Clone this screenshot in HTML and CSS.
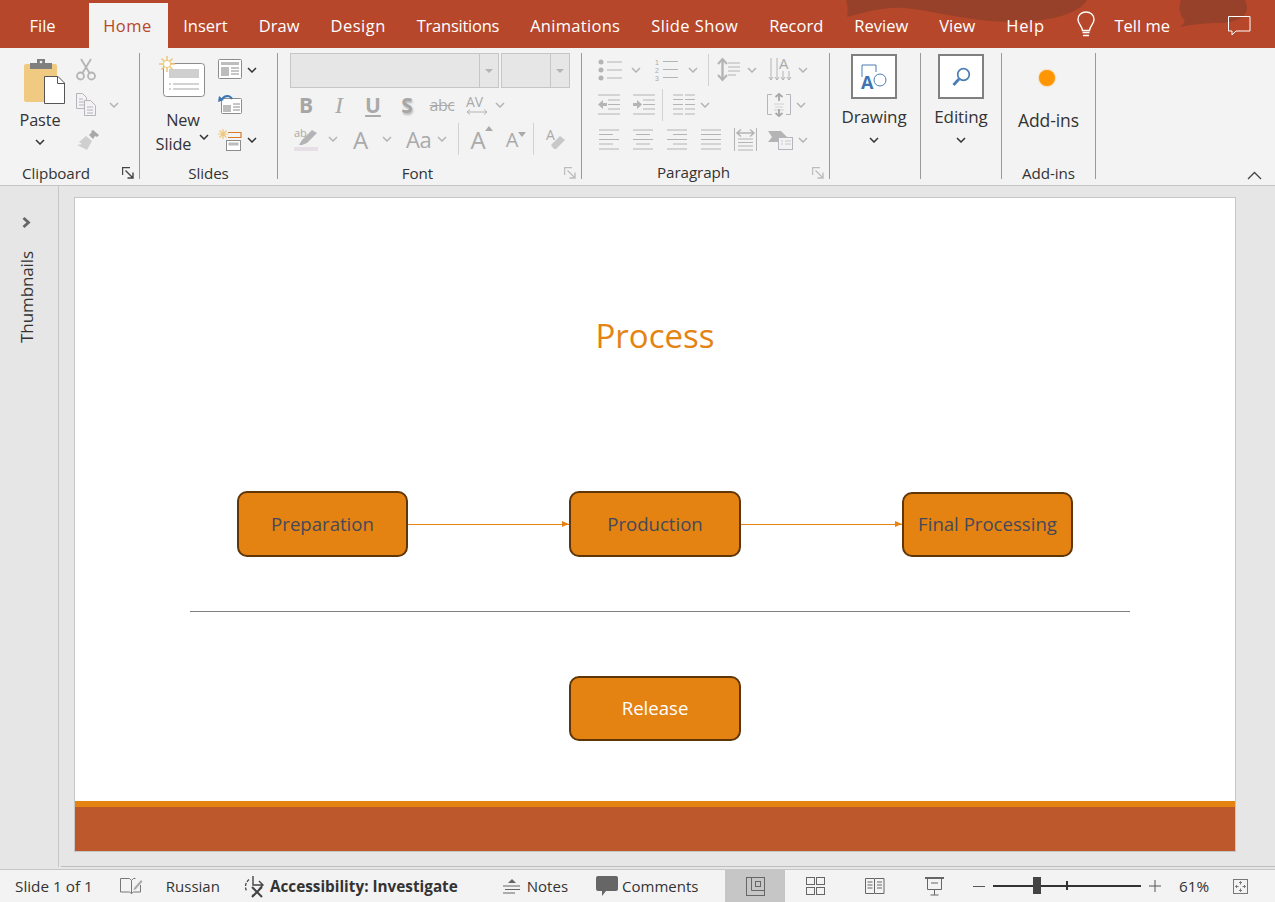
FILE: index.html
```html
<!DOCTYPE html>
<html lang="en">

<head>
  <meta charset="UTF-8">
  <title>Process - PowerPoint</title>
  <link rel="stylesheet" href="styles.css">
</head>

<body>

  <svg class="defs" width="0" height="0">
    <symbol id="chev" viewBox="0 0 10 6"><path d="M1 1l4 4 4-4" fill="none" stroke="currentColor" stroke-width="1.5"/></symbol>
    <symbol id="launch" viewBox="0 0 12 12"><path d="M.5 8V.5H8M3.5 3.5l7 7M11 5.5V11H5.5" fill="none" stroke="currentColor" stroke-width="1.4"/></symbol>
  </svg>

  <!-- title bar with tabs -->
  <div class="titlebar">
    <svg class="waves" width="1275" height="48" viewBox="0 0 1275 48">
      <path d="M846 0C848 6 848 12 847 17C862 13 885 6 905 8C935 11 975 23 1020 22C1055 21 1080 12 1087 0Z" fill="#97412a"/>
      <path d="M1181 0C1178 8 1180 16 1185 21C1183 24 1182 25 1180 27C1195 24 1205 23 1222 23C1235 22 1247 18 1247 8C1247 4 1246 2 1245 0Z" fill="#97412a"/>
    </svg>
    <div class="tab tab-file">File</div>
    <div class="tab tab-active">Home</div>
    <div class="tab">Insert</div>
    <div class="tab">Draw</div>
    <div class="tab tab-design">Design</div>
    <div class="tab tab-trans">Transitions</div>
    <div class="tab tab-anim">Animations</div>
    <div class="tab tab-show">Slide Show</div>
    <div class="tab">Record</div>
    <div class="tab">Review</div>
    <div class="tab">View</div>
    <div class="tab tab-help">Help</div>
    <div class="title-right">
      <svg width="18" height="26" viewBox="0 0 18 26" fill="none" stroke="#fff" stroke-width="1.4"><path d="M5.5 19.5C5 15 1 13 1 8.500C1 4 4.500 1 9 1s8 3 8 7.500C17 13 13 15 12.500 19.500Z"/><path d="M5.500 21.500h7M6 24.500h6" stroke-width="1.6"/></svg>
      <span class="tell">Tell me</span>
      <svg class="title-comment" width="23" height="20" viewBox="0 0 23 20" fill="none" stroke="#fff"><path d="M.5.500h21.500v14.500H8l-4 4v-4H.5Z"/></svg>
    </div>
  </div>

  <!-- ribbon -->
  <div class="ribbon">

    <div class="group g-clipboard">
      <div class="group-body">
        <div class="big paste">
          <svg width="41" height="46" viewBox="0 0 41 46">
            <rect x="0" y="5" width="33" height="38" rx="2" fill="#f0ca80"/>
            <path d="M13 0h8v4h7v6H6V4h7Z" fill="#7f7f7f"/>
            <circle cx="17" cy="3" r="1.300" fill="#f3f3f3"/>
            <path d="M20.500 17.500H34l6.500 6.500v20.500h-20Z" fill="#fff" stroke="#555"/>
            <path d="M33.500 18v6.500H40" fill="none" stroke="#555"/>
          </svg>
          <span class="big-label paste-label">Paste</span>
          <svg class="chev-dark paste-chev" width="10" height="6"><use href="#chev"/></svg>
        </div>
        <div class="rows3 small-col">
          <div class="cell">
            <svg width="20" height="23" viewBox="0 0 20 23" fill="none" stroke="#b4b4b4" stroke-width="1.800"><circle cx="4.500" cy="18" r="3.500"/><circle cx="15.500" cy="18" r="3.500"/><path d="M6.500 15L15 1M13.500 15L5 1"/></svg>
          </div>
          <div class="cell cell-gap13">
            <svg width="20" height="23" viewBox="0 0 20 23" fill="#f3f3f3" stroke="#b9b3bd"><path d="M.5.500h6l4 4v11H.5Z"/><path d="M8.500 7.500h6l5 5v10h-11Z"/><path d="M3 6h4M3 9h5M3 12h5M11 14h6M11 17h6M11 20h6"/></svg>
            <svg class="chev-off" width="10" height="6"><use href="#chev"/></svg>
          </div>
          <div class="cell">
            <svg width="24" height="22" viewBox="0 0 24 22"><path d="M17 1l6 5-2 2-2-1-2 3-4-4 3-3-1-1Z" fill="#a8a8a8"/><path d="M10 7l6 5-5 9-10-5 5-1-3-2Z" fill="#cfcfcf"/></svg>
          </div>
        </div>
      </div>
      <div class="group-label has-launcher label-clipboard">Clipboard</div>
      <svg class="launcher launcher-on" width="12" height="12"><use href="#launch"/></svg>
    </div>

    <div class="group g-slides">
      <div class="group-body">
        <div class="big new-slide">
          <svg width="46" height="42" viewBox="0 0 46 42">
            <rect x="4.500" y="7.500" width="41" height="33" rx="3" fill="#fff" stroke="#8c8c8c"/>
            <rect x="10" y="13" width="30" height="9" fill="#cfcfcf"/>
            <path d="M10 28h2M14 28h26M10 33h2M14 33h26" stroke="#a6a6a6"/>
            <path d="M8 0v16M0 8h16M2.500 2.500l11 11M13.500 2.500l-11 11" stroke="#efc77c" stroke-width="1.600"/>
            <circle cx="8" cy="8" r="3.600" fill="#fff" stroke="#efc77c"/>
          </svg>
          <span class="big-label new-label">New</span>
          <span class="big-label slide-label">Slide <svg class="chev-dark" width="10" height="6"><use href="#chev"/></svg></span>
        </div>
        <div class="rows3 small-col layouts">
          <div class="cell cell-gap4">
            <svg width="25" height="21" viewBox="0 0 25 21"><rect x=".5" y=".5" width="23" height="19" rx="1" fill="#fff" stroke="#8c8c8c"/><path d="M3 3h18v3H3ZM3 8h8v9H3Z" fill="#bdbdbd"/><path d="M13 9h8M13 12h8M13 15h8" stroke="#8c8c8c"/></svg>
            <svg class="chev-dark" width="10" height="6"><use href="#chev"/></svg>
          </div>
          <div class="cell">
            <svg width="25" height="20" viewBox="0 0 25 20"><rect x="3.500" y="3.500" width="20" height="15" rx="1" fill="#fff" stroke="#8c8c8c"/><path d="M5 10h8v7H5Z" fill="#bdbdbd"/><path d="M15 9h7M15 12h7M15 15h7" stroke="#8c8c8c"/><path d="M4 4C7 0 12 0 14 4" fill="none" stroke="#3d75b3" stroke-width="2"/><path d="M0 7l1-6 5 4Z" fill="#3d75b3"/></svg>
          </div>
          <div class="cell cell-gap4">
            <svg width="25" height="22" viewBox="0 0 25 22"><path d="M5 0v10M0 5h10M1.500 1.500l7 7M8.500 1.500l-7 7" stroke="#efc77c" stroke-width="1.200"/><path d="M10 3.500h13v5h-13" fill="none" stroke="#d97a2a" stroke-width="1.200"/><rect x="8.500" y="11.500" width="14" height="10" fill="#fff" stroke="#8c8c8c"/><rect x="10.500" y="13.500" width="10" height="3" fill="#bdbdbd"/></svg>
            <svg class="chev-dark" width="10" height="6"><use href="#chev"/></svg>
          </div>
        </div>
      </div>
      <div class="group-label">Slides</div>
    </div>

    <div class="group g-font">
      <div class="group-body">
        <div class="combos">
          <div class="combo combo-name"><span class="combo-btn"></span></div>
          <div class="combo combo-size"><span class="combo-btn"></span></div>
        </div>
        <div class="font-row row2">
          <span class="fmt fmt-b">B</span>
          <span class="fmt fmt-i">I</span>
          <span class="fmt fmt-u">U</span>
          <span class="fmt fmt-s">S</span>
          <span class="fmt fmt-abc">abc</span>
          <span class="fmt fmt-av">
            <svg width="22" height="20" viewBox="0 0 22 20"><text x="0" y="12" class="av-text">AV</text><path d="M1 17h20M4 14.500L1 17l3 2.500M18 14.500l3 2.500-3 2.500" fill="none" stroke="#b4b4b4"/></svg>
            <svg class="chev-off" width="10" height="6"><use href="#chev"/></svg>
          </span>
        </div>
        <div class="font-row row3">
          <span class="fmt fmt-hl">
            <svg width="24" height="23" viewBox="0 0 24 23"><text x="0" y="9" class="hl-text">ab</text><path d="M5 17l3-5L18 2l5 3-10 10-5 2Z" fill="#b4b4b4"/><rect y="19" width="24" height="4" fill="#e6e0e6"/></svg>
            <svg class="chev-off" width="10" height="6"><use href="#chev"/></svg>
          </span>
          <span class="fmt fmt-a">A
            <svg class="chev-off" width="10" height="6"><use href="#chev"/></svg>
          </span>
          <span class="fmt fmt-aa">Aa
            <svg class="chev-off" width="10" height="6"><use href="#chev"/></svg>
          </span>
          <span class="vsep"></span>
          <span class="fmt fmt-grow">A<i class="tri-up"></i></span>
          <span class="fmt fmt-shrink">A<i class="tri-down"></i></span>
          <span class="vsep"></span>
          <span class="fmt fmt-clear">
            <svg width="20" height="22" viewBox="0 0 20 22"><text x="0" y="12" class="clear-text">A</text><path d="M5 17l9-9 5 4-9 9h-2Z" fill="#c8c8c8"/></svg>
          </span>
        </div>
      </div>
      <div class="group-label has-launcher">Font</div>
      <svg class="launcher" width="12" height="12"><use href="#launch"/></svg>
    </div>

    <div class="group g-para">
      <div class="group-body rows3">
        <div class="para-row">
          <span class="pb p-bullets">
            <svg width="24" height="22" viewBox="0 0 24 22"><circle cx="3" cy="3" r="2.500" fill="#b4b4b4"/><circle cx="3" cy="11" r="2.500" fill="#b4b4b4"/><circle cx="3" cy="19" r="2.500" fill="#b4b4b4"/><path d="M9 3h15M9 11h15M9 19h15" stroke="#b4b4b4"/></svg>
            <svg class="chev-off" width="10" height="6"><use href="#chev"/></svg>
          </span>
          <span class="pb p-numbers">
            <svg width="24" height="24" viewBox="0 0 24 24"><text x="0" y="7" class="num-text">1</text><text x="0" y="15" class="num-text">2</text><text x="0" y="23" class="num-text">3</text><path d="M8 3.500h15M8 11.500h15M8 19.500h15" stroke="#b4b4b4"/></svg>
            <svg class="chev-off" width="10" height="6"><use href="#chev"/></svg>
          </span>
          <span class="vsep"></span>
          <span class="pb p-spacing">
            <svg width="23" height="25" viewBox="0 0 23 25" fill="none" stroke="#b4b4b4"><path d="M4.500 2v21" stroke-width="2.400"/><path d="M0 7l4.500-5L9 7M0 18l4.500 5L9 18" stroke-width="2"/><path d="M10 6h12M10 10h12M10 14h12M10 18h8"/></svg>
            <svg class="chev-off" width="10" height="6"><use href="#chev"/></svg>
          </span>
          <span class="pb p-dir">
            <svg width="24" height="25" viewBox="0 0 24 25"><text x="10" y="12" class="dir-text">A</text><path d="M2 1v22M8 1v22M14 14v9M20 14v9M0 20l2 3 2-3M6 20l2 3 2-3M12 20l2 3 2-3M18 20l2 3 2-3" fill="none" stroke="#b4b4b4"/></svg>
            <svg class="chev-off" width="10" height="6"><use href="#chev"/></svg>
          </span>
        </div>
        <div class="para-row">
          <span class="pb p-outdent">
            <svg width="23" height="21" viewBox="0 0 23 21"><path d="M0 1h22M10 6h12M10 10.500h12M10 15h12M0 20h22" stroke="#b4b4b4"/><path d="M0 10.500L5 6v3h4v3H5v3Z" fill="#b4b4b4"/></svg>
          </span>
          <span class="pb p-indent">
            <svg width="23" height="21" viewBox="0 0 23 21"><path d="M1 1h22M11 6h12M11 10.500h12M11 15h12M1 20h22" stroke="#b4b4b4"/><path d="M10 10.500L5 6v3H1v3h4v3Z" fill="#b4b4b4"/></svg>
          </span>
          <span class="vsep"></span>
          <span class="pb p-cols">
            <svg width="22" height="21" viewBox="0 0 22 21"><path d="M0 1h10M12 1h10M0 5.500h10M12 5.500h10M0 10.500h10M12 10.500h10M0 15h10M12 15h10M0 20h10M12 20h10" stroke="#b4b4b4"/></svg>
            <svg class="chev-off" width="10" height="6"><use href="#chev"/></svg>
          </span>
          <span class="pb p-valign">
            <svg width="24" height="24" viewBox="0 0 24 24" fill="none" stroke="#b9b3bd"><path d="M5 1.500H.5v20H5M19 1.500h4.500v20H19"/><path d="M7 11h10M8 14h8M7 17h10" stroke="#d0d0d0"/><path d="M12 1v7M8.500 4L12 1l3.500 3M12 16v7M8.500 20l3.500 3 3.500-3" stroke="#a8a8a8" stroke-width="1.800"/></svg>
            <svg class="chev-off" width="10" height="6"><use href="#chev"/></svg>
          </span>
        </div>
        <div class="para-row">
          <span class="pb p-align">
            <svg width="21" height="21" viewBox="0 0 21 21"><path d="M0 1h20M0 5.500h14M0 10.500h20M0 15h14M0 20h20" stroke="#b4b4b4"/></svg>
          </span>
          <span class="pb p-align">
            <svg width="21" height="21" viewBox="0 0 21 21"><path d="M0 1h20M3 5.500h14M0 10.500h20M3 15h14M0 20h20" stroke="#b4b4b4"/></svg>
          </span>
          <span class="pb p-align">
            <svg width="21" height="21" viewBox="0 0 21 21"><path d="M0 1h20M6 5.500h14M0 10.500h20M6 15h14M0 20h20" stroke="#b4b4b4"/></svg>
          </span>
          <span class="pb p-align">
            <svg width="21" height="21" viewBox="0 0 21 21"><path d="M0 1h20M0 5.500h20M0 10.500h20M0 15h20M0 20h20" stroke="#b4b4b4"/></svg>
          </span>
          <span class="pb p-dist">
            <svg width="23" height="23" viewBox="0 0 23 23" fill="none" stroke="#b4b4b4"><path d="M.5 0v23M22.500 0v23M4 11h15M4 14.500h15M4 18h15M4 22h15"/><path d="M3 5h17M7 1.500L3 5l4 3.500M16 1.500L20 5l-4 3.500" stroke-width="1.500"/></svg>
          </span>
          <span class="pb p-smart">
            <svg width="25" height="20" viewBox="0 0 25 20"><path d="M0 1h13l6 6-6 5H0l4-5Z" fill="#b4b4b4"/><rect x="10.500" y="7.500" width="14" height="12" fill="#f3f3f3" stroke="#b9b3bd"/><path d="M13 11h2M17 11h6M13 14h2M17 14h6" stroke="#c8c8c8"/></svg>
            <svg class="chev-off" width="10" height="6"><use href="#chev"/></svg>
          </span>
        </div>
      </div>
      <div class="group-label has-launcher">Paragraph</div>
      <svg class="launcher" width="12" height="12"><use href="#launch"/></svg>
    </div>

    <div class="group g-drawing">
      <div class="group-body framed">
        <div class="frame">
          <svg width="26" height="26" viewBox="0 0 26 26"><path d="M1 13V1h14v7" fill="none" stroke="#4a7db5"/><circle cx="19" cy="16" r="6" fill="none" stroke="#4a7db5"/><text x="0" y="25" class="shape-a">A</text></svg>
        </div>
        <span class="big-label frame-label">Drawing</span>
        <svg class="chev-dark frame-chev" width="10" height="6"><use href="#chev"/></svg>
      </div>
    </div>

    <div class="group g-editing">
      <div class="group-body framed">
        <div class="frame">
          <svg width="19" height="20" viewBox="0 0 19 20" fill="none" stroke="#4a7db5"><circle cx="11.500" cy="7.500" r="5.800" stroke-width="1.700"/><path d="M7 12l-5.500 6" stroke-width="2.800"/></svg>
        </div>
        <span class="big-label frame-label">Editing</span>
        <svg class="chev-dark frame-chev" width="10" height="6"><use href="#chev"/></svg>
      </div>
    </div>

    <div class="group g-addins">
      <div class="group-body addins-body">
        <span class="addin-dot"></span>
        <span class="big-label addin-label">Add-ins</span>
      </div>
      <div class="group-label">Add-ins</div>
    </div>

    <svg class="collapse" width="15" height="9" viewBox="0 0 15 9"><path d="M1 8l6.500-6.500L14 8" fill="none" stroke="#444" stroke-width="1.300"/></svg>
  </div>

  <!-- thumbnails pane and slide -->
  <div class="workspace">
    <div class="thumbs">
      <svg width="9" height="11" viewBox="0 0 9 11"><path d="M1.500 1l5 4.500-5 4.500" fill="none" stroke="#666" stroke-width="2.800"/></svg>
      <span class="thumbs-label">Thumbnails</span>
    </div>
    <div class="stage">
      <div class="slide">
        <div class="slide-title">Process</div>
        <div class="node node-prep">Preparation</div>
        <div class="arrow arrow-1"></div>
        <div class="node node-prod">Production</div>
        <div class="arrow arrow-2"></div>
        <div class="node node-final">Final Processing</div>
        <div class="divider"></div>
        <div class="node node-release">Release</div>
        <div class="slide-footer"></div>
      </div>
    </div>
  </div>

  <!-- status bar -->
  <div class="statusbar">
    <span class="st-count">Slide 1 of 1</span>
    <svg class="st-book" width="23" height="18" viewBox="0 0 23 18" fill="none" stroke="#777"><path d="M.5 1.500h9l2 2v13l-2-1.500h-9ZM11.500 3.500l2-2h2M20.500 8v7h-7l-2 1.500"/><path d="M14 11l7-8 1.500 1.500-7 8-2 .5Z" fill="#aaa" stroke="none"/></svg>
    <span class="st-lang">Russian</span>
    <svg class="st-a11y" width="22" height="23" viewBox="0 0 22 23" fill="none" stroke="#444"><path d="M5 4.500C1 8 .5 13 3 16.500M8 20c1 .3 1.500.3 2.500.3" stroke-dasharray="3 1.500" stroke-width="1.300"/><path d="M9 1v9h10M15 6l4 4-4 4" stroke-width="1.400"/><path d="M8 12l10 10M18 12L8 22" stroke-width="2"/></svg>
    <span class="st-access">Accessibility: Investigate</span>
    <svg class="st-notes" width="18" height="17" viewBox="0 0 18 17"><path d="M9 1l4 4H5Z" fill="#666"/><path d="M0 8h17M2 11.500h15M0 15h12" stroke="#666"/></svg>
    <span class="st-notes-label">Notes</span>
    <svg class="st-comments" width="22" height="20" viewBox="0 0 22 20"><path d="M2 0h18a2 2 0 0 1 2 2v11a2 2 0 0 1-2 2H10l-4 5v-5H2a2 2 0 0 1-2-2V2a2 2 0 0 1 2-2Z" fill="#666"/></svg>
    <span class="st-comments-label">Comments</span>

    <div class="st-right">
      <div class="view view-on">
        <svg width="19" height="19" viewBox="0 0 19 19" fill="none" stroke="#666"><rect x=".5" y=".5" width="18" height="18"/><path d="M5.500 1v12.500H18"/><rect x="9.500" y="4.500" width="5" height="5"/></svg>
      </div>
      <div class="view">
        <svg width="19" height="18" viewBox="0 0 19 18" fill="none" stroke="#666"><rect x=".5" y=".5" width="8" height="7"/><rect x="10.500" y=".5" width="8" height="7"/><rect x=".5" y="10.500" width="8" height="7"/><rect x="10.500" y="10.500" width="8" height="7"/></svg>
      </div>
      <div class="view">
        <svg width="20" height="18" viewBox="0 0 20 18" fill="none" stroke="#666"><path d="M.5 1.500h9v15h-9ZM10 1.500h9v15h-9M2.500 5h5M2.500 8h5M2.500 11h5M12 5h5M12 8h5M12 11h5"/></svg>
      </div>
      <div class="view">
        <svg width="20" height="19" viewBox="0 0 20 19" fill="none" stroke="#666"><path d="M0 1h19" stroke-width="2"/><path d="M2.500 1v11.500h14V1M6 6h7M9.500 12.500V18M5.500 18h8"/></svg>
      </div>
      <div class="zoom">
        <span class="zoom-minus"></span>
        <div class="zoom-track">
          <span class="zoom-tick"></span>
          <span class="zoom-thumb"></span>
        </div>
        <svg class="zoom-plus" width="12" height="12" viewBox="0 0 12 12"><path d="M0 6h12M6 0v12" stroke="#555"/></svg>
      </div>
      <span class="zoom-pct">61%</span>
      <svg class="st-fit" width="15" height="15" viewBox="0 0 15 15" fill="none" stroke="#777"><rect x=".5" y=".5" width="14" height="14"/><path d="M7.500 2.500v3M7.500 9.500v3M2.500 7.500h3M9.500 7.500h3M6 4l1.500-1.500L9 4M6 11l1.500 1.500L9 11M4 6L2.500 7.500 4 9M11 6l1.500 1.500L11 9"/></svg>
    </div>
  </div>

</body>

</html>
```

FILE: styles.css
```css
* {
  box-sizing: border-box;
}

body {
  margin: 0;
  width: 1275px;
  height: 902px;
  overflow: hidden;
  display: flex;
  flex-direction: column;
  background: #e6e6e6;
  font-family: "Open Sans", "Noto Sans", sans-serif;
  font-size: 16px;
  letter-spacing: -0.1px;
  color: #333;
}

svg {
  display: block;
  flex: none;
  overflow: visible;
}

.defs {
  position: absolute;
}

.chev-dark {
  color: #333;
}

.chev-off {
  color: #b4b4b4;
}

/* title bar */
.titlebar {
  position: relative;
  height: 48px;
  flex: none;
  display: flex;
  background: #b7472a;
  color: #fff;
  padding-left: 14px;
  font-size: 16.5px;
  letter-spacing: 0;
}

.waves {
  position: absolute;
  left: 0;
  top: 0;
}

.tab {
  position: relative;
  height: 45px;
  margin-top: 3px;
  padding: 0 15.5px;
  line-height: 46px;
  white-space: nowrap;
}

.tab-file {
  margin-right: 18px;
}

.tab-active {
  background: #f3f3f3;
  color: #b7472a;
  padding: 0 16px 0 14px;
  letter-spacing: 0.5px;
}

.tab-design { letter-spacing: 0.5px; }
.tab-trans { letter-spacing: -0.25px; }
.tab-anim { letter-spacing: 0.3px; }
.tab-show { letter-spacing: 0.4px; }
.tab-help { letter-spacing: 0.7px; }

.title-right {
  position: relative;
  margin-left: auto;
  padding-right: 24px;
  display: flex;
  align-items: center;
  height: 48px;
}

.tell {
  margin-left: 19px;
  margin-top: 2px;
}

.title-comment {
  margin-left: 58px;
  margin-top: 3px;
}

/* ribbon */
.ribbon {
  position: relative;
  height: 138px;
  flex: none;
  display: flex;
  align-items: flex-start;
  padding-top: 5px;
  background: #f3f3f3;
  border-bottom: 1px solid #c6c6c6;
}

.group {
  position: relative;
  height: 126px;
  border-right: 1px solid #9a9a9a;
  display: flex;
  flex-direction: column;
}

.g-clipboard { width: 140px; }
.g-slides { width: 138px; }
.g-font { width: 304px; }
.g-para { width: 248px; }
.g-drawing { width: 91px; }
.g-editing { width: 81px; }
.g-addins { width: 94px; }

.group-body {
  height: 114px;
  flex: none;
  display: flex;
}

.group-label {
  height: 12px;
  line-height: 12px;
  text-align: center;
  font-size: 15.2px;
  white-space: nowrap;
}

.has-launcher {
  padding-right: 24px;
}

.label-clipboard {
  padding-right: 27px;
}

.launcher {
  position: absolute;
  right: 5px;
  bottom: 0;
  color: #bdbdbd;
}

.launcher-on {
  color: #444;
}

.big {
  display: flex;
  flex-direction: column;
  align-items: center;
}

.big-label {
  height: 20px;
  line-height: 20px;
  white-space: nowrap;
  font-size: 16.3px;
}

.rows3 {
  display: grid;
  grid-template-rows: 35px 35px 35px;
  align-content: start;
  margin-top: -1px;
}

.cell {
  display: flex;
  align-items: center;
}

.cell-gap13 { gap: 13px; }
.cell-gap4 { gap: 4px; }

/* clipboard */
.paste {
  width: 50px;
  margin-left: 15px;
  padding-top: 6px;
}

.paste svg:first-child {
  margin-left: 9px;
  align-self: flex-start;
}

.paste-label {
  margin-top: 5px;
}

.paste-chev {
  margin-top: 9px;
}

.small-col {
  margin-left: 11px;
}

/* slides */
.new-slide {
  width: 56px;
  margin-left: 15px;
  padding-top: 3px;
}

.new-slide svg:first-child {
  align-self: flex-start;
  margin-left: 4px;
}

.new-label {
  margin-top: 12px;
}

.slide-label {
  margin-top: 4px;
  margin-left: -1px;
  display: flex;
  align-items: center;
  gap: 4px;
}

.layouts {
  margin-left: 7px;
}

/* font */
.g-font .group-body {
  display: block;
  padding-left: 12px;
}

.combos {
  display: flex;
  gap: 2px;
  height: 35px;
}

.combo {
  display: flex;
  justify-content: flex-end;
  background: #e6e6e6;
  border: 1px solid #c6c6c6;
}

.combo-name { width: 209px; }
.combo-size { width: 69px; }

.combo-btn {
  position: relative;
  width: 19px;
  border-left: 1px solid #c6c6c6;
}

.combo-btn::after {
  content: "";
  position: absolute;
  left: 5px;
  top: 15px;
  border: 4px solid transparent;
  border-top: 4px solid #b4b4b4;
}

.font-row {
  display: flex;
  align-items: center;
  height: 34px;
  color: #aaa;
}

.fmt {
  display: flex;
  align-items: center;
  justify-content: center;
  flex: none;
}

.fmt-b, .fmt-i, .fmt-u, .fmt-s {
  width: 34px;
  font-size: 21px;
  font-weight: 700;
}

.fmt-b { width: 32px; color: #a6a6a6; }
.fmt-i { font-style: italic; font-weight: 400; font-family: "Liberation Serif", serif; font-size: 24px; }
.fmt-u { text-decoration: underline; }
.fmt-s { text-shadow: 1px 2px 2px #bbb; color: #a6a6a6; }

.fmt-abc {
  width: 36px;
  font-size: 16px;
  text-decoration: line-through;
  letter-spacing: -0.5px;
}

.fmt-av {
  margin-left: 6px;
  gap: 7px;
}

.av-text {
  font-size: 14px;
  fill: #aaa;
}

.fmt-hl {
  width: 52px;
  gap: 10px;
  justify-content: flex-start;
  padding-left: 4px;
}

.hl-text {
  font-size: 11px;
  fill: #aaa;
}

.fmt-a {
  width: 54px;
  font-size: 24px;
  gap: 14px;
  padding-left: 11px;
  justify-content: flex-start;
}

.fmt-aa {
  width: 62px;
  font-size: 22px;
  gap: 6px;
  letter-spacing: -0.5px;
  padding-left: 10px;
  justify-content: flex-start;
}

.vsep {
  width: 1px;
  height: 32px;
  flex: none;
  background: #d2d2d2;
}

.fmt-grow, .fmt-shrink {
  position: relative;
  font-size: 24px;
}

.fmt-grow {
  width: 38px;
}

.fmt-shrink {
  width: 36px;
  font-size: 20px;
  padding-right: 6px;
}

.tri-up, .tri-down {
  position: absolute;
  border: 4px solid transparent;
}

.tri-up {
  border-bottom: 5px solid #aaa;
  right: 4px;
  top: -1px;
}

.tri-down {
  border-top: 5px solid #aaa;
  right: 7px;
  top: 6px;
}

.fmt-clear {
  width: 44px;
}

.clear-text {
  font-size: 14px;
  fill: #aaa;
}

/* paragraph */
.g-para .group-body {
  padding-left: 16px;
}

.para-row {
  display: flex;
  align-items: center;
  height: 35px;
}

.pb {
  display: flex;
  align-items: center;
  flex: none;
}

.p-bullets { width: 57px; gap: 9px; }
.p-numbers { width: 53px; gap: 9px; }
.p-spacing { width: 51px; gap: 6px; margin-left: 9px; }
.p-dir { width: 44px; gap: 5px; }
.p-outdent { width: 34px; }
.p-indent { width: 30px; }
.p-cols { width: 43px; gap: 5px; margin-left: 10px; }
.p-valign { gap: 5px; margin-left: 51px; }
.p-align { width: 34px; padding-left: 1px; }
.p-dist { width: 34px; }
.p-smart { gap: 5px; }

.num-text {
  font-family: "Liberation Sans", sans-serif;
  font-size: 7px;
  fill: #aaa;
}

.dir-text {
  font-size: 15px;
  fill: #aaa;
}

/* drawing and editing */
.framed {
  flex-direction: column;
  align-items: center;
  padding-top: 1px;
}

.g-drawing .framed {
  padding-right: 2px;
}

.frame {
  width: 46px;
  height: 45px;
  display: flex;
  align-items: center;
  justify-content: center;
  background: #fff;
  border: 2px solid #808080;
}

.frame-label {
  margin-top: 8px;
  font-size: 17px;
}

.frame-chev {
  margin-top: 10px;
}

.shape-a {
  font-size: 18px;
  font-weight: 700;
  fill: #3d75b3;
}

/* add-ins */
.addins-body {
  flex-direction: column;
  align-items: center;
  padding-top: 17px;
}

.addin-dot {
  width: 16px;
  height: 16px;
  margin-right: 3px;
  border-radius: 50%;
  background: #ff9500;
  box-shadow: 0 0 2px #ffb040;
}

.addin-label {
  margin-top: 24px;
  font-size: 17.5px;
}

.collapse {
  position: absolute;
  right: 13px;
  bottom: 5px;
}

/* workspace */
.workspace {
  flex: 1;
  display: flex;
  min-height: 0;
}

.thumbs {
  width: 59px;
  flex: none;
  height: 681px;
  border-right: 1px solid #c6c6c6;
  display: flex;
  flex-direction: column;
  align-items: center;
  padding-top: 31px;
  padding-right: 5px;
}

.thumbs-label {
  writing-mode: vertical-rl;
  transform: rotate(180deg);
  margin-top: 23px;
  font-size: 17px;
  line-height: 20px;
}

.stage {
  flex: 1;
  height: 681px;
  margin-left: 2px;
  padding: 11px 0 0 14px;
  border-bottom: 1px solid #bdbdbd;
}

.slide {
  position: relative;
  width: 1162px;
  height: 655px;
  background: #fff;
  border: 1px solid #c6c6c6;
  margin-left: -1px;
  display: flex;
  flex-direction: column;
  justify-content: flex-end;
}

.slide-title {
  position: absolute;
  left: 0;
  right: 0;
  top: 114px;
  text-align: center;
  font-size: 33px;
  line-height: 48px;
  letter-spacing: 0;
  color: #e48312;
}

.node {
  position: absolute;
  width: 171px;
  height: 66px;
  padding-bottom: 2px;
  display: flex;
  align-items: center;
  justify-content: center;
  background: #e48312;
  border: 2px solid #5f3608;
  border-radius: 10px;
  font-size: 18.6px;
  letter-spacing: 0;
  color: #46495a;
}

.node-prep { left: 162px; top: 293px; }
.node-prod { left: 494px; top: 293px; width: 172px; }
.node-final { left: 827px; top: 294px; height: 65px; }
.node-release { left: 494px; top: 478px; width: 172px; height: 65px; color: #fff; }

.arrow {
  position: absolute;
  top: 326px;
  width: 161px;
  height: 1px;
  background: #e48312;
}

.arrow::after {
  content: "";
  position: absolute;
  right: 0;
  top: -3px;
  border-left: 7px solid #e48312;
  border-top: 3.5px solid transparent;
  border-bottom: 3.5px solid transparent;
}

.arrow-1 { left: 333px; }
.arrow-2 { left: 666px; }

.divider {
  position: absolute;
  left: 115px;
  top: 413px;
  width: 940px;
  height: 1px;
  background: #808080;
}

.slide-footer {
  height: 50px;
  background: #bd582c;
  border-top: 6px solid #e48312;
}

/* status bar */
.statusbar {
  height: 33px;
  flex: none;
  margin-top: 2px;
  display: flex;
  align-items: center;
  padding-left: 15px;
  background: #f3f3f3;
  border-top: 1px solid #c6c6c6;
  font-size: 15.3px;
  letter-spacing: 0;
  white-space: nowrap;
}

.st-book { margin-left: 27px; }
.st-lang { margin-left: 23px; font-size: 15px; }
.st-a11y { margin-left: 24px; }
.st-access { margin-left: 4px; font-weight: 700; }
.st-notes { margin-left: 45px; }
.st-notes-label { margin-left: 6px; font-size: 15px; }
.st-comments { margin-left: 28px; margin-right: 4px; }
.st-comments-label { font-size: 15px; }

.st-right {
  margin-left: auto;
  display: flex;
  align-items: center;
  height: 100%;
  padding-right: 27px;
}

.view {
  width: 60px;
  height: 100%;
  display: flex;
  align-items: center;
  justify-content: center;
}

.view-on {
  background: #c6c6c6;
}

.zoom {
  display: flex;
  align-items: center;
  margin-left: 8px;
}

.zoom-minus {
  width: 12px;
  height: 1px;
  background: #555;
}

.zoom-track {
  position: relative;
  width: 148px;
  height: 2px;
  margin-left: 8px;
  background: #333;
}

.zoom-thumb {
  position: absolute;
  left: 40px;
  top: -8px;
  width: 8px;
  height: 17px;
  background: #444;
}

.zoom-tick {
  position: absolute;
  left: 73px;
  top: -4px;
  width: 2px;
  height: 9px;
  background: #333;
}

.zoom-plus {
  margin-left: 8px;
}

.zoom-pct {
  margin-left: 18px;
  width: 31px;
}

.st-fit {
  margin-left: 23px;
}
```
